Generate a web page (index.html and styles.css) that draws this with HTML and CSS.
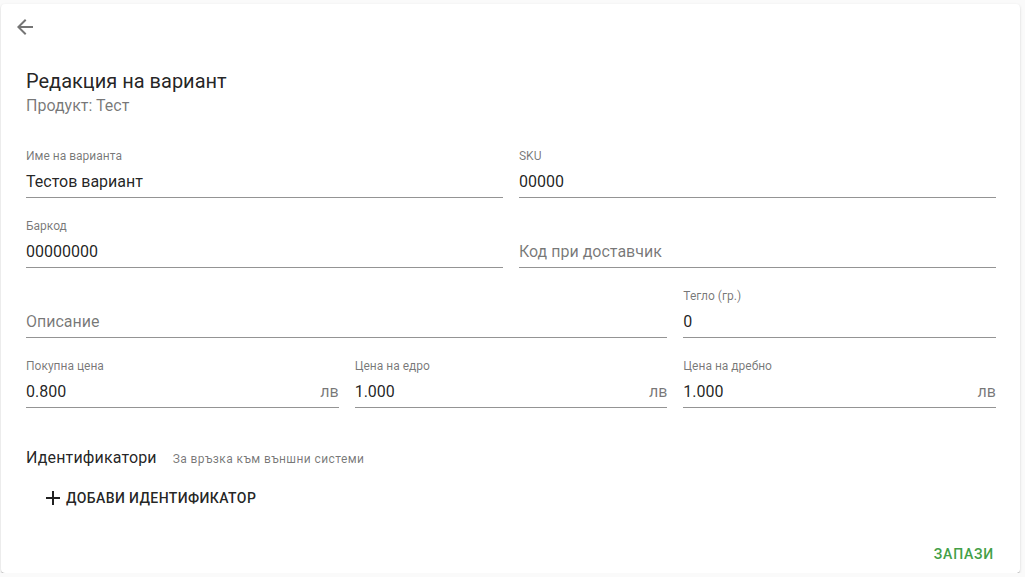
FILE: index.html
```html
<!DOCTYPE html>
<html lang="bg">
<head>
<meta charset="utf-8">
<title>Редакция на вариант</title>
<link rel="stylesheet" href="styles.css">
</head>
<body>
<div class="card">
  <div class="card-header">
    <button class="icon-btn" aria-label="Назад">
      <svg viewBox="0 0 24 24" width="24" height="24"><path d="M20 11H7.83l5.59-5.59L12 4l-8 8 8 8 1.41-1.41L7.83 13H20v-2z"/></svg>
    </button>
  </div>
  <div class="card-body">
    <h1 class="title">Редакция на вариант</h1>
    <div class="subtitle">Продукт: Тест</div>

    <div class="form-grid">
      <div class="field span-3">
        <div class="label">Име на варианта</div>
        <div class="input"><span class="value">Тестов вариант</span></div>
      </div>
      <div class="field span-3">
        <div class="label">SKU</div>
        <div class="input"><span class="value">00000</span></div>
      </div>
      <div class="field span-3">
        <div class="label">Баркод</div>
        <div class="input"><span class="value">00000000</span></div>
      </div>
      <div class="field span-3">
        <div class="label"></div>
        <div class="input"><span class="value placeholder">Код при доставчик</span></div>
      </div>
      <div class="field span-4">
        <div class="label"></div>
        <div class="input"><span class="value placeholder">Описание</span></div>
      </div>
      <div class="field span-2">
        <div class="label">Тегло (гр.)</div>
        <div class="input"><span class="value">0</span></div>
      </div>
      <div class="field span-2">
        <div class="label">Покупна цена</div>
        <div class="input"><span class="value">0.800</span><span class="suffix">лв</span></div>
      </div>
      <div class="field span-2">
        <div class="label">Цена на едро</div>
        <div class="input"><span class="value">1.000</span><span class="suffix">лв</span></div>
      </div>
      <div class="field span-2">
        <div class="label">Цена на дребно</div>
        <div class="input"><span class="value">1.000</span><span class="suffix">лв</span></div>
      </div>
    </div>

    <div class="section-head">
      <span class="section-title">Идентификатори</span>
      <span class="section-caption">За връзка към външни системи</span>
    </div>
    <button class="text-btn add-btn">
      <svg viewBox="0 0 24 24" width="24" height="24"><path d="M19 13h-6v6h-2v-6H5v-2h6V5h2v6h6v2z"/></svg>
      <span>Добави идентификатор</span>
    </button>
  </div>
  <div class="card-actions">
    <button class="text-btn save-btn">Запази</button>
  </div>
</div>
</body>
</html>
```
FILE: styles.css
```css
* { box-sizing: border-box; }
html, body { margin: 0; padding: 0; }
body {
  background: #fafafa;
  font-family: Roboto, "Liberation Sans", sans-serif;
  color: rgba(0,0,0,0.87);
  padding: 4px 0 0 1px;
}
.card {
  width: 1019px;
  height: 569px;
  background: #fff;
  border-radius: 4px;
  box-shadow: 0 2px 1px -1px rgba(0,0,0,0.2), 0 1px 1px 0 rgba(0,0,0,0.14), 0 1px 3px 0 rgba(0,0,0,0.12);
  display: flex;
  flex-direction: column;
}
.card-header {
  height: 48px;
  padding: 11px 0 0 12px;
}
.icon-btn {
  border: 0;
  background: none;
  padding: 0;
  width: 24px;
  height: 24px;
  display: block;
  cursor: pointer;
}
.icon-btn svg { display: block; fill: rgba(0,0,0,0.54); }
.card-body {
  padding: 0 24px 0 25px;
}
.title {
  margin: 15px 0 0;
  font-size: 20px;
  font-weight: 400;
  line-height: 28px;
  letter-spacing: 0;
}
.subtitle {
  margin-top: 1px;
  font-size: 16px;
  line-height: 20px;
  color: rgba(0,0,0,0.54);
}
.form-grid {
  margin-top: 32px;
  display: grid;
  grid-template-columns: repeat(6, 1fr);
  column-gap: 16px;
  row-gap: 20px;
}
.span-2 { grid-column: span 2; }
.span-3 { grid-column: span 3; }
.span-4 { grid-column: span 4; }
.field { display: flex; flex-direction: column; }
.label {
  height: 16px;
  font-size: 12px;
  line-height: 16px;
  color: rgba(0,0,0,0.54);
}
.input {
  margin-top: 6px;
  padding-bottom: 3px;
  border-bottom: 1px solid rgba(0,0,0,0.42);
  display: flex;
  align-items: center;
}
.value {
  flex: 1;
  font-size: 16px;
  line-height: 24px;
}
.value.placeholder { color: rgba(0,0,0,0.54); }
.suffix {
  margin-left: 8px;
  font-size: 16px;
  line-height: 24px;
  color: rgba(0,0,0,0.54);
}
.section-head {
  margin-top: 38px;
  display: flex;
  align-items: baseline;
  gap: 16px;
}
.section-title {
  font-size: 16px;
  line-height: 24px;
  letter-spacing: 0.15px;
}
.section-caption {
  font-size: 12px;
  letter-spacing: 0.4px;
  color: rgba(0,0,0,0.54);
}
.text-btn {
  border: 0;
  background: none;
  font-family: inherit;
  font-size: 14px;
  font-weight: 500;
  line-height: 24px;
  letter-spacing: 0.4px;
  text-transform: uppercase;
  padding: 6px 8px;
  border-radius: 4px;
  cursor: pointer;
  display: inline-flex;
  align-items: center;
}
.add-btn {
  margin: 10px 0 0 7px;
  color: rgba(0,0,0,0.87);
  gap: 1px;
}
.add-btn svg { display: block; fill: rgba(0,0,0,0.87); }
.card-actions {
  margin-top: auto;
  display: flex;
  justify-content: flex-end;
  padding: 0 18px 1px 0;
}
.save-btn { color: #43a047; letter-spacing: 0.8px; }
```
